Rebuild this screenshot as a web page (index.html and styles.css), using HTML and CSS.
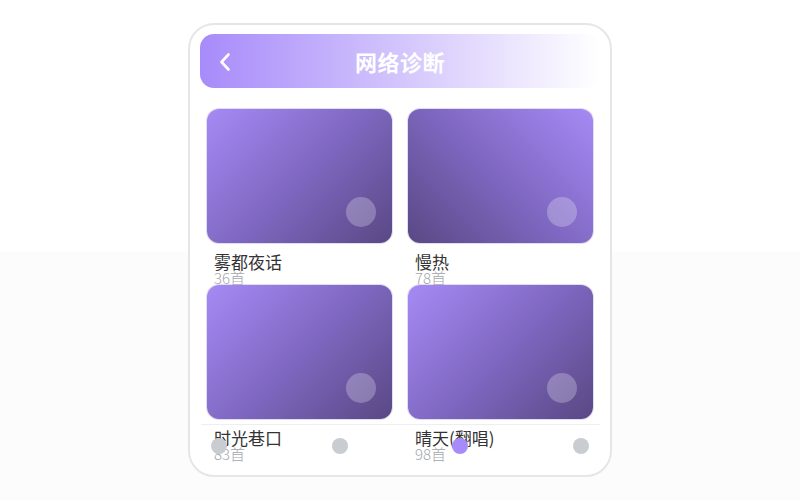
FILE: index.html
```html
<!DOCTYPE html>
<html lang="zh">
<head>
<meta charset="utf-8">
<title>网络诊断</title>
<link rel="stylesheet" href="styles.css">
</head>
<body>
<div class="phone">
  <header class="header">
    <span class="back">
      <svg width="14" height="20" viewBox="0 0 14 20"><path d="M10.5 2.5 L3.5 10 L10.5 17.5" fill="none" stroke="#fff" stroke-width="2.6" stroke-linecap="round" stroke-linejoin="round"/></svg>
    </span>
    <h1 class="title">网络诊断</h1>
    <span></span>
  </header>
  <main class="grid">
    <div class="item">
      <div class="cover cover-a"><span class="knob"></span></div>
      <div class="name">雾都夜话</div>
      <div class="sub">36首</div>
    </div>
    <div class="item">
      <div class="cover cover-b"><span class="knob"></span></div>
      <div class="name">慢热</div>
      <div class="sub">78首</div>
    </div>
    <div class="item">
      <div class="cover cover-a"><span class="knob"></span></div>
      <div class="name">时光巷口</div>
      <div class="sub">83首</div>
    </div>
    <div class="item">
      <div class="cover cover-a"><span class="knob"></span></div>
      <div class="name">晴天(翻唱)</div>
      <div class="sub">98首</div>
    </div>
  </main>
  <nav class="tabbar">
    <span class="dot"></span>
    <span class="dot"></span>
    <span class="dot active"></span>
    <span class="dot"></span>
  </nav>
</div>
</body>
</html>
```

FILE: styles.css
```css
* { box-sizing: border-box; }
html, body { height: 100%; }
body {
  margin: 0;
  display: flex;
  align-items: center;
  justify-content: center;
  background: linear-gradient(180deg, #ffffff 50.4%, #fcfcfd 50.4%);
  font-family: "Noto Sans CJK SC", "Noto Sans", sans-serif;
}
.phone {
  position: relative;
  width: 424px;
  height: 454px;
  border: 2px solid #e6e6ea;
  border-radius: 26px;
  background: #ffffff;
  padding: 9px 10px;
  display: flex;
  flex-direction: column;
  overflow: hidden;
}
.header {
  flex: none;
  height: 54px;
  border-radius: 14px;
  background: linear-gradient(90deg, #a78bfa 0%, #ffffff 100%);
  display: grid;
  grid-template-columns: 50px 1fr 50px;
  align-items: center;
}
.back {
  display: flex;
  justify-content: center;
  align-items: center;
  padding-top: 1px;
}
.back svg { display: block; }
.title {
  margin: 0;
  text-align: center;
  color: #ffffff;
  font-size: 22px;
  font-weight: 700;
  line-height: 52px;
  letter-spacing: 0.5px;
}
.grid {
  flex: 1;
  min-height: 0;
  overflow: hidden;
  display: grid;
  grid-template-columns: 1fr 1fr;
  column-gap: 16px;
  align-content: start;
  padding: 21px 7px 0;
}
.cover {
  position: relative;
  height: 134px;
  border-radius: 12px;
  box-shadow: 0 0 0 1px rgba(190, 175, 230, 0.45);
}
.cover-a { background: linear-gradient(135deg, #a68af5 0%, #7f68c2 50%, #594884 100%); }
.cover-b { background: linear-gradient(225deg, #a68af5 0%, #7f68c2 50%, #594884 100%); }
.knob {
  position: absolute;
  right: 16px;
  bottom: 16px;
  width: 30px;
  height: 30px;
  border-radius: 50%;
  background: rgba(255, 255, 255, 0.25);
}
.name {
  margin-top: 10px;
  padding-left: 7px;
  font-size: 17px;
  font-weight: 400;
  line-height: 18px;
  color: #333333;
  white-space: nowrap;
}
.sub {
  padding-left: 7px;
  font-size: 15px;
  font-weight: 300;
  line-height: 14px;
  color: #a3a6ab;
}
.tabbar {
  position: absolute;
  left: 11px;
  right: 10px;
  bottom: 9px;
  height: 42px;
  border-top: 1px solid #eceef1;
  display: flex;
  align-items: center;
  justify-content: space-between;
  padding: 0 11px 0 10px;
}
.dot {
  width: 16px;
  height: 16px;
  border-radius: 50%;
  background: #c9ccd1;
}
.dot.active { background: #a78bfa; }
```
